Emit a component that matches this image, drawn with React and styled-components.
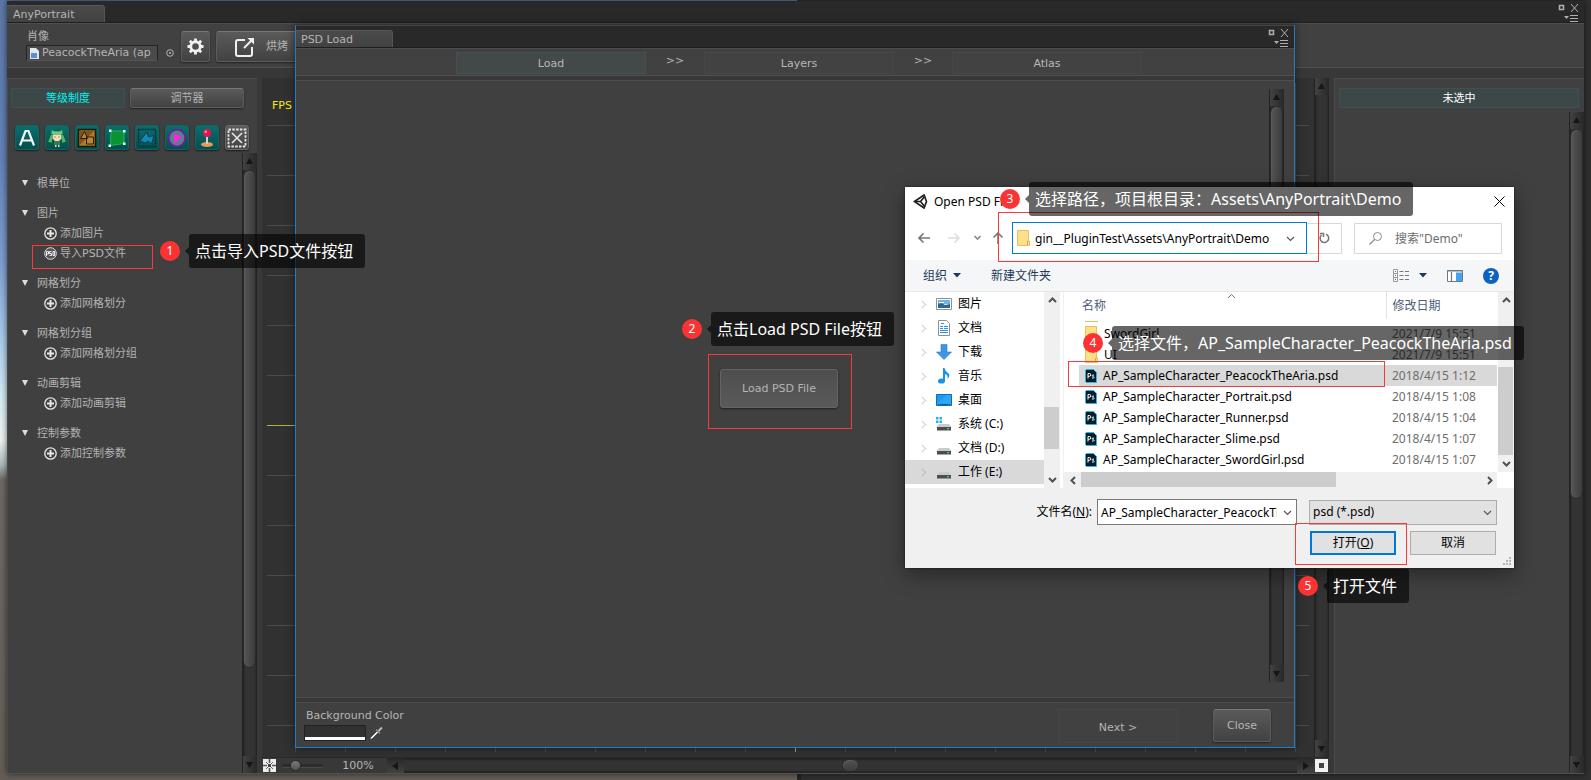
import React from "react";
import styled, { createGlobalStyle, css } from "styled-components";

const unity = '"DejaVu Sans", "Noto Sans CJK SC", sans-serif';
const win = '"Noto Sans", "Noto Sans CJK SC", sans-serif';

const GlobalStyle = createGlobalStyle`
  * { box-sizing: border-box; }
  body { margin: 0; background: #645d56; }
  button, input, select { font: inherit; color: inherit; margin: 0; padding: 0; border: 0; background: none; border-radius: 0; outline: 0; }
  button { text-align: inherit; }
  svg { display: block; flex: none; }
`;

/* ---------- desktop ---------- */

const Desktop = styled.div`
  position: relative;
  min-height: 100vh;
  padding: 1px 7px 6px;
  display: flex;
  overflow: hidden;
  background:
    linear-gradient(90deg, #242424 4px, #303030 4px) 797px 100% / 100% 6px no-repeat,
    linear-gradient(90deg, #5b74a0 797px, #303030 797px) 0 0 / 100% 1px no-repeat,
    linear-gradient(#303030, #303030) 100% 0 / 7px 100% no-repeat,
    linear-gradient(#5c76a6 0, #6382b8 160px, #7e9ccf 260px, #a9cbea 340px, #d5ecf3 400px, #eef2ec 440px, #a9b9bb 465px, #6e6763 480px, #645d56 100%);
`;

const AppWindow = styled.main`
  flex: 1;
  min-width: 0;
  display: flex;
  flex-direction: column;
  background: #383838;
  color: #b4b4b4;
  font: 11px/20px ${unity};
  box-shadow: 0 0 6px rgba(0, 0, 0, 0.6);
  border-bottom: 1px solid #505050;
`;

const TabStrip = styled.header`
  height: 22px;
  display: flex;
  align-items: flex-end;
  justify-content: space-between;
  background: #292929;
  border-bottom: 1px solid #1f1f1f;
`;

const Tab = styled.div`
  width: ${(p) => p.$width}px;
  height: 17px;
  padding-left: ${(p) => p.$pad}px;
  line-height: 18px;
  background: linear-gradient(#4a4a4a, #424242);
  border-top: 1px solid #585858;
  border-right: 1px solid #555;
  border-radius: 0 3px 0 0;
`;

const ControlsBox = styled.div`
  display: flex;
  align-self: stretch;
  padding: 2px 2px 0 0;
`;

const WindowControls = () => (
  <ControlsBox>
    <svg width="25" height="19" viewBox="0 0 25 19" fill="none" stroke="#b0b0b0">
      <path d="M2.500 2.500h4v4h-4z" strokeWidth="1.500" />
      <path d="M14 1l7 8M21 1l-7 8" />
      <path d="M7 13h5l-2.500 3z" fill="#b0b0b0" stroke="none" />
      <path d="M13 12.500h8M13 15.500h8M13 18.500h8" />
    </svg>
  </ControlsBox>
);

const raised = css`
  background: linear-gradient(#5a5a5a, #424242);
  border: 1px solid #5c5c5c;
  border-top-color: #787878;
  border-radius: 3px;
  box-shadow: 0 1px 2px rgba(0, 0, 0, 0.5);
`;

const AppHeader = styled.div`
  height: 45px;
  display: flex;
  gap: 6px;
  padding: 7px 19px 0;
  background: #414141;
  border-top: 1px solid #4e4e4e;
  border-bottom: 1px solid #505050;
`;

const ObjectField = styled.label`
  width: 149px;
  display: flex;
  flex-direction: column;
  line-height: 14px;
`;

const FieldName = styled.span`
  padding-left: 1px;
  height: 14px;
  line-height: 12px;
`;

const FieldRow = styled.span`
  display: flex;
  align-items: center;
  gap: 8px;
`;

const FieldBox = styled.span`
  width: 132px;
  height: 16px;
  display: flex;
  align-items: center;
  gap: 3px;
  padding-left: 3px;
  background: #4a4a4a;
  border: 1px solid #242424;
  border-bottom-color: #555;
`;

const FieldInput = styled.input`
  flex: 1;
  min-width: 0;
  height: 14px;
`;

const HeadButton = styled.button`
  ${raised}
  width: ${(p) => p.$width}px;
  height: 31px;
  display: flex;
  align-items: center;
  gap: 11px;
  padding-left: ${(p) => p.$pad}px;
`;

const Workspace = styled.div`
  flex: 1;
  display: flex;
  padding-top: 10px;
`;

const SidePanel = styled.aside`
  width: 250px;
  display: flex;
  flex-direction: column;
  background: #404040;
  border-top: 1px solid #4c4c4c;
  border-left: 1px solid #4a4a4a;
`;

const PanelTabs = styled.div`
  display: flex;
  gap: 5px;
  padding: 9px 13px 0 3px;
`;

const panelOn = css`
  color: #00f0f0;
  background: #3c4848;
  border: 1px solid #3b5250;
`;

const PanelTab = styled.button`
  flex: 1;
  height: 20px;
  padding-top: 1px;
  line-height: 18px;
  text-align: center;
  ${(p) => (p.$on ? panelOn : raised)}
`;

const IconRow = styled.div`
  display: flex;
  gap: 6px;
  padding: 17px 7px 3px;
`;

const IconButton = styled.button`
  width: 24px;
  height: 25px;
  display: grid;
  place-items: center;
  border-radius: 3px;
  background: ${(p) => (p.$plain ? "linear-gradient(#5c5c5c, #444)" : "linear-gradient(#0b6e6c, #054f4d)")};
  border: 1px solid ${(p) => (p.$plain ? "#6a6a6a" : "#126462")};
  box-shadow: 0 1px 2px rgba(0, 0, 0, 0.6);
`;

const ScrollArea = styled.div`
  flex: 1;
  display: flex;
  justify-content: space-between;
  padding-top: ${(p) => p.$top || 0}px;
`;

const Tree = styled.nav`
  padding: 21px 0 0 14px;
  display: flex;
  flex-direction: column;
  gap: 10px;
`;

const Group = styled.section`
  display: flex;
  flex-direction: column;
`;

const GroupHead = styled.button`
  display: flex;
  align-items: center;
  gap: 9px;
  height: 20px;
  line-height: 22px;
`;

const Leaf = styled.button`
  display: flex;
  align-items: center;
  gap: 3px;
  height: 20px;
  padding: 0 0 1px 22px;
  line-height: 22px;
`;

/* ---------- dark scrollbars ---------- */

const VBar = styled.div`
  width: 15px;
  flex: none;
  display: flex;
  flex-direction: column;
  background: #333;
  border-left: 1px solid #232323;
  box-shadow: inset 1px 0 2px rgba(0, 0, 0, 0.4), inset -1px 0 2px rgba(0, 0, 0, 0.4);
`;

const HBar = styled.div`
  height: 15px;
  flex: 1;
  display: flex;
  background: #333;
  box-shadow: inset 0 2px 2px rgba(0, 0, 0, 0.3), inset 0 -2px 2px rgba(0, 0, 0, 0.3);
`;

const BarArrow = styled.button`
  width: ${(p) => (p.$h ? 17 : 14)}px;
  height: ${(p) => (p.$h ? 15 : 17)}px;
  flex: none;
  display: grid;
  place-items: center;
  background: ${(p) => (p.$h ? "linear-gradient(#282828, #424242)" : "linear-gradient(90deg, #424242, #282828)")};
`;

const BarTrack = styled.div`
  flex: 1;
  display: flex;
  flex-direction: ${(p) => (p.$h ? "row" : "column")};
  align-items: ${(p) => (p.$h ? "center" : "flex-start")};
  justify-content: ${(p) => (p.$h ? "center" : "flex-start")};
`;

const BarThumb = styled.div`
  width: ${(p) => (p.$h ? "17px" : "13px")};
  height: ${(p) => (p.$h ? "13px" : `${p.$size}%`)};
  border-radius: 7px;
  border: 1px solid #2a2a2a;
  box-shadow: inset 1px 1px 0 #5a5a5a;
  background: ${(p) => (p.$h ? "linear-gradient(#525252, #3c3c3c)" : "linear-gradient(90deg, #555, #3c3c3c)")};
`;

const arrows = {
  up: "M3.500 0l3.500 6H0z",
  down: "M0 1h7l-3.500 6z",
  left: "M6 0v8L0 4z",
  right: "M1 0v8l6-4z",
};

const Arrow = ({ dir, h }) => (
  <BarArrow $h={h} aria-label={dir}>
    <svg width="8" height="8" viewBox="0 0 8 8">
      <path d={arrows[dir]} fill="#151515" />
    </svg>
  </BarArrow>
);

const VScroll = ({ size }) => (
  <VBar>
    <Arrow dir="up" />
    <BarTrack>{size ? <BarThumb $size={size} /> : null}</BarTrack>
    <Arrow dir="down" />
  </VBar>
);

/* ---------- canvas ---------- */

const CenterPane = styled.section`
  flex: 1;
  min-width: 0;
  display: flex;
  flex-direction: column;
  margin: 0 5px;
`;

const CanvasRow = styled.div`
  flex: 1;
  display: flex;
`;

const Canvas = styled.div`
  flex: 1;
  display: flex;
  padding: 5px;
  background: #313131;
`;

const Grid = styled.div`
  flex: 1;
  padding: 13px 5px;
  color: #f2ee1c;
  background:
    linear-gradient(#b3ad48, #b3ad48) 0 342px / 100% 1px no-repeat,
    linear-gradient(#b3ad48, #b3ad48) 528px 0 / 1px 100% no-repeat,
    linear-gradient(#4b4b4b 1px, transparent 1px) 0 42px / 100% 50px,
    linear-gradient(90deg, #4b4b4b 1px, transparent 1px) 28px 0 / 50px 100%;
`;

const InfoBody = styled.div`
  flex: 1;
`;

const ZoomBar = styled.div`
  height: 16px;
  display: flex;
  align-items: flex-end;
  border-top: 1px solid #2a2a2a;
`;

const ZoomTools = styled.div`
  width: 125px;
  height: 15px;
  display: flex;
  align-items: center;
  gap: 6px;
  padding-left: 1px;
`;

const ZoomLabel = styled.output`
  flex: 1;
  text-align: center;
`;

const Slider = styled.input`
  appearance: none;
  width: 41px;
  height: 4px;
  border-radius: 2px;
  background: #2c2c2c;
  border-bottom: 1px solid #4a4a4a;
  &::-webkit-slider-thumb {
    appearance: none;
    width: 11px;
    height: 11px;
    border-radius: 50%;
    border: 1px solid #2a2a2a;
    background: linear-gradient(#7a7a7a, #555);
  }
`;

const InfoPanel = styled.aside`
  width: 250px;
  display: flex;
  flex-direction: column;
  background: #404040;
  border-top: 1px solid #4c4c4c;
  border-left: 1px solid #4c4c4c;
`;

const InfoTitle = styled.h2`
  margin: 9px 5px 0 4px;
  height: 20px;
  padding-top: 1px;
  font: inherit;
  line-height: 18px;
  text-align: center;
  color: #fff;
  background: #3c4848;
  border: 1px solid #3b5250;
`;

/* ---------- PSD window ---------- */

const PsdWindow = styled.section`
  position: absolute;
  left: 295px;
  top: 25px;
  width: 1000px;
  height: 723px;
  display: flex;
  flex-direction: column;
  background: #383838;
  color: #b4b4b4;
  font: 11px/20px ${unity};
  border: 1px solid #1f7dca;
  border-top-color: #444;
  box-shadow: 0 0 8px rgba(0, 0, 0, 0.5);
`;

const Steps = styled.ol`
  display: flex;
  height: 28px;
  margin: 0;
  padding: 3px 0 0 160px;
  list-style: none;
  background: #414141;
  border-top: 1px solid #4c4c4c;
  border-bottom: 1px solid #505050;
`;

const Step = styled.li`
  width: 190px;
  height: 22px;
  line-height: 22px;
  text-align: center;
  color: #b8b8b8;
  background: ${(p) => (p.$on ? "#434849" : "#424242")};
  border: 1px solid ${(p) => (p.$on ? "#3f5254" : "#474747")};
`;

const StepArrow = styled.li`
  width: 58px;
  line-height: 18px;
  text-align: center;
`;

const PsdBody = styled.div`
  flex: 1;
  display: flex;
  margin: 4px 0;
  background: #404040;
  border-top: 1px solid #4e4e4e;
  border-bottom: 1px solid #4e4e4e;
  padding: 8px 10px 15px 0;
`;

const PsdContent = styled.div`
  flex: 1;
  display: flex;
  justify-content: center;
  align-items: flex-start;
  padding: 280px 7px 0 0;
`;

const LoadButton = styled.button`
  width: 118px;
  height: 39px;
  text-align: center;
  background: linear-gradient(#4e4e4e, #5a5a5a);
  border: 1px solid #646464;
  border-radius: 3px;
  box-shadow: 0 1px 2px rgba(0, 0, 0, 0.5);
`;

const PsdFooter = styled.footer`
  height: 45px;
  display: flex;
  align-items: flex-start;
  justify-content: space-between;
  padding: 6px 23px 0 8px;
  background: #404040;
  border-top: 1px solid #4e4e4e;
`;

const ColorField = styled.div`
  display: flex;
  flex-direction: column;
  line-height: 14px;
  gap: 2px;
`;

const ColorName = styled.label`
  padding-left: 2px;
`;

const ColorRow = styled.div`
  display: flex;
  gap: 3px;
`;

const Swatch = styled.button`
  width: 62px;
  height: 16px;
  background: #313131;
  border: 1px solid #222;
  box-shadow: inset 0 -3px 0 #fff;
`;

const FooterButtons = styled.div`
  display: flex;
  gap: 35px;
`;

const NextButton = styled.button`
  width: 120px;
  height: 34px;
  padding-top: 4px;
  text-align: center;
  background: #414141;
  border: 1px solid #454545;
`;

const CloseButton = styled.button`
  ${raised}
  width: 58px;
  height: 33px;
  text-align: center;
`;

/* ---------- open file dialog ---------- */

const Dialog = styled.section`
  position: absolute;
  left: 905px;
  top: 187px;
  width: 609px;
  display: flex;
  flex-direction: column;
  background: #fff;
  color: #000;
  font: 12px/16px ${win};
  box-shadow: 0 0 2px rgba(0, 0, 0, 0.6), 0 6px 20px rgba(0, 0, 0, 0.4);
`;

const DialogTitle = styled.header`
  height: 29px;
  display: flex;
  align-items: center;
  gap: 6px;
  padding: 0 9px 0 8px;
`;

const TitleText = styled.h2`
  flex: 1;
  margin: 0;
  font: inherit;
`;

const NavRow = styled.div`
  height: 44px;
  display: flex;
  align-items: center;
  padding: 0 12px 0 13px;
`;

const NavButtons = styled.div`
  width: 94px;
  display: flex;
  align-items: center;
`;

const Address = styled.div`
  width: 295px;
  height: 32px;
  display: flex;
  align-items: center;
  gap: 5px;
  padding: 0 11px 0 4px;
  border: 1px solid #0078d7;
`;

const AddressInput = styled.input`
  flex: 1;
  min-width: 0;
  height: 28px;
`;

const Refresh = styled.button`
  width: 35px;
  height: 31px;
  display: grid;
  place-items: center;
  border: 1px solid #d9d9d9;
  border-left: 0;
`;

const Search = styled.label`
  flex: 1;
  height: 31px;
  margin-left: 12px;
  display: flex;
  align-items: center;
  gap: 13px;
  padding-left: 14px;
  border: 1px solid #d9d9d9;
`;

const SearchInput = styled.input`
  width: 80px;
  height: 28px;
  &::placeholder { color: #6d6d6d; opacity: 1; }
`;

const CommandBar = styled.div`
  height: 32px;
  display: flex;
  align-items: center;
  justify-content: space-between;
  padding: 0 15px 0 18px;
  color: #1e395b;
  background: #f5f6f7;
  border-bottom: 1px solid #e6e7e8;
`;

const Commands = styled.div`
  display: flex;
  align-items: center;
  gap: ${(p) => p.$gap}px;
`;

const Command = styled.button`
  display: flex;
  align-items: center;
  gap: ${(p) => p.$gap || 6}px;
`;

const HelpButton = styled.button`
  width: 16px;
  height: 16px;
  border-radius: 50%;
  background: #0a63c2;
  color: #fff;
  font-weight: 700;
  text-align: center;
`;

const Panes = styled.div`
  height: 196px;
  display: flex;
`;

const Places = styled.ul`
  width: 139px;
  margin: 0;
  padding: 0;
  list-style: none;
`;

const Place = styled.li`
  height: 24px;
  display: flex;
  align-items: center;
  gap: 4px;
  padding-left: 14px;
  background: ${(p) => (p.$on ? "#d9d9d9" : "transparent")};
`;

const PlaceIcon = styled.span`
  width: 22px;
  display: flex;
  padding-left: 4px;
`;

const LightBar = styled.div`
  width: 16px;
  flex: none;
  display: flex;
  flex-direction: column;
  align-items: center;
  background: #f0f0f0;
`;

const LightArrow = styled.button`
  width: 16px;
  height: 17px;
  flex: none;
  display: grid;
  place-items: center;
`;

const LightTrack = styled.div`
  flex: 1;
  align-self: stretch;
  display: flex;
  padding: ${(p) => p.$before}px 1px ${(p) => p.$after}px 0;
`;

const LightThumb = styled.div`
  flex: ${(p) => p.$flex || 1};
  background: #cdcdcd;
`;

const LightGap = styled.div`
  flex: 36;
`;

const LightH = styled.div`
  height: 16px;
  margin-right: 17px;
  padding-left: 1px;
  display: flex;
  background: #f0f0f0;
`;

const FilePane = styled.div`
  flex: 1;
  min-width: 0;
  margin-left: 3px;
  display: flex;
  flex-direction: column;
  border-left: 1px solid #f0f0f0;
`;

const FileArea = styled.div`
  height: 180px;
  display: flex;
`;

const FileScroll = styled.div`
  flex: 1;
  min-width: 0;
  padding: 0 1px 0 15px;
`;

const FileTable = styled.table`
  width: 100%;
  table-layout: fixed;
  border-collapse: collapse;
`;

const Th = styled.th`
  width: ${(p) => p.$width};
  height: 27px;
  padding: 0 0 0 ${(p) => p.$pad}px;
  font-weight: 400;
  text-align: left;
  line-height: 27px;
  color: #4c607a;
  border-right: ${(p) => (p.$line ? "1px solid #e2e2e2" : "0")};
`;

const HeadCell = styled.span`
  display: flex;
  align-items: flex-start;
  gap: 121px;
`;

const FileRow = styled.tr`
  height: ${(p) => p.$height || 21}px;
  background: ${(p) => (p.$on ? "#d9d9d9" : "transparent")};
`;

const Td = styled.td`
  padding: 0 0 0 6px;
  color: ${(p) => (p.$muted ? "#6d6d6d" : "#000")};
  white-space: nowrap;
`;

const FileName = styled.span`
  display: flex;
  align-items: center;
  gap: 6px;
`;

const Sliver = styled.div`
  width: 13px;
  height: 1px;
  background: #e0bd55;
`;

const DialogFooter = styled.footer`
  height: 80px;
  display: flex;
  flex-direction: column;
  padding: 11px 17px 0;
  background: #f0f0f0;
  gap: 6px;
`;

const FormRow = styled.div`
  display: flex;
  justify-content: flex-end;
  align-items: center;
  gap: ${(p) => p.$gap}px;
  padding-right: ${(p) => p.$right || 0}px;
`;

const NameLabel = styled.label`
  margin-right: 5px;
`;

const NameBox = styled.div`
  width: 200px;
  height: 26px;
  display: flex;
  align-items: center;
  padding: 0 4px 0 3px;
  background: #fff;
  border: 1px solid #7a7a7a;
`;

const NameInput = styled.input`
  width: 177px;
  height: 24px;
  margin-right: 6px;
`;

const TypeBox = styled.div`
  width: 188px;
  height: 25px;
  margin-left: 12px;
  display: grid;
  grid-template-columns: 1fr 13px;
  align-items: center;
  background: #e1e1e1;
  border: 1px solid #adadad;
`;

const TypeSelect = styled.select`
  grid-area: 1 / 1 / 2 / 3;
  appearance: none;
  height: 23px;
  padding-left: 3px;
`;

const TypeArrow = styled.span`
  grid-area: 1 / 2;
  pointer-events: none;
`;

const DialogButton = styled.button`
  width: 86px;
  height: 24px;
  text-align: center;
  background: #e1e1e1;
  border: ${(p) => (p.$primary ? "2px solid #0078d7" : "1px solid #adadad")};
`;

const Grip = styled.div`
  position: absolute;
  right: 2px;
  bottom: 2px;
`;

/* ---------- annotations ---------- */

const Pin = styled.div`
  position: absolute;
  left: ${(p) => p.$x}px;
  top: ${(p) => p.$y}px;
  display: flex;
  align-items: center;
`;

const PinNumber = styled.span`
  width: 20px;
  height: 20px;
  border-radius: 50%;
  background: #fb3333;
  color: #fff;
  font: 12px/20px ${win};
  text-align: center;
`;

const PinArrow = styled.span`
  margin-left: 5px;
  border: 4px solid transparent;
  border-left: 0;
  border-right-color: rgba(0, 0, 0, 0.6);
`;

const PinText = styled.span`
  height: 34px;
  padding: 0 12px 0 6px;
  border-radius: 3px;
  background: rgba(0, 0, 0, 0.6);
  color: #fff;
  font: 16px/34px ${win};
  white-space: nowrap;
`;

const Highlight = styled.div`
  position: absolute;
  left: ${(p) => p.$x}px;
  top: ${(p) => p.$y}px;
  width: ${(p) => p.$w}px;
  height: ${(p) => p.$h}px;
  border: 1px solid #f83a3a;
  pointer-events: none;
`;

/* ---------- icons ---------- */

const PlusIcon = () => (
  <svg width="13" height="13" viewBox="0 0 13 13" fill="none" stroke="#e6e6e6">
    <circle cx="6.500" cy="6.500" r="5.700" strokeWidth="1.300" />
    <path d="M6.500 3v7M3 6.500h7" strokeWidth="2" />
  </svg>
);

const PsdBadgeIcon = () => (
  <svg width="13" height="13" viewBox="0 0 13 13" fill="none" stroke="#e0e0e0">
    <circle cx="6.500" cy="6.500" r="5.800" fill="#555" />
    <path d="M2.500 9V4.500h2V7h-2M7.500 4.500h-2v2h2v2h-2M9 4.500v4h1.500v-4z" stroke="#fff" strokeWidth=".9" />
  </svg>
);

const PsIcon = () => (
  <svg width="12" height="14" viewBox="0 0 12 14">
    <path d="M1.500.5h7l3 3v10h-10L.5 12.500v-11z" fill="#061e2b" stroke="#26b5ea" />
    <path d="M3 9.500V4.500h1.300q1.500 0 1.500 1.400T4.300 7.300H3M9 6.200q-1.800-.5-1.800.5c0 1 1.900.7 1.900 1.800q-.2 1-2.100.5" fill="none" stroke="#fff" />
  </svg>
);

const FolderIcon = () => (
  <svg width="13" height="16" viewBox="0 0 13 16">
    <path d="M.5.5h11v10l1 .5v4.500H.5z" fill="#ffe08a" stroke="#e6c05a" />
    <path d="M10.500 15v-4h1.500" fill="none" stroke="#d9ad3c" />
  </svg>
);

const Drive = () => (
  <g>
    <path d="M3 8h10l2 3H1z" fill="#c9cccf" />
    <path d="M1 11h14v3.500H1z" fill="#4a4e51" />
    <path d="M11 12.300h2v1h-2z" fill="#3cff4e" />
  </g>
);

const placeArt = {
  pic: (
    <g>
      <path d="M.5 2.500h15v11H.5z" fill="#fff" stroke="#8c9297" />
      <path d="M2 4h12v4H2z" fill="#6fb2e8" />
      <path d="M2 8q4-2 7 1l5-1v4H2z" fill="#2f6a8c" />
      <path d="M3 6h5v1H3z" fill="#fff" />
    </g>
  ),
  doc: (
    <g>
      <path d="M2.500.5h8l3 3v12h-11z" fill="#fff" stroke="#8c9297" />
      <path d="M5 3.500h3M4 6.500h3M4 8.500h3M8 6.500h4M8 8.500h4M4 10.500h8M4 12.500h8" stroke="#2d8fd5" />
    </g>
  ),
  down: <path d="M5 .5h6V8h4.500L8 15.500.5 8H5z" fill="#3b97e3" stroke="#2b7bc4" strokeWidth=".6" />,
  music: (
    <g>
      <ellipse cx="5.500" cy="13" rx="3.500" ry="2.600" fill="#1693e8" />
      <path d="M7 13V0h1.500q.5 3 3.500 5t-.5 6q1-4-2.500-5v7z" fill="#1693e8" />
    </g>
  ),
  desk: (
    <g>
      <path d="M.5 2.500h15v11H.5z" fill="#1a9bf0" stroke="#0d6fb8" />
      <path d="M1 11.500L11 3h4v9z" fill="#3db1fa" opacity=".5" />
      <path d="M2 12.500h1M4 12.500h8M13 12.500h1" stroke="#0d5c9c" />
    </g>
  ),
  sys: (
    <g>
      <path d="M0 1h2.500v2.500H0zM3.500 1H6v2.500H3.500zM0 4.500h2.500V7H0zM3.500 4.500H6V7H3.500z" fill="#1eb4f0" />
      <Drive />
    </g>
  ),
  drive: <Drive />,
};

const lightArrows = {
  up: "M1 6l3.500-3.500L8 6",
  down: "M1 3l3.500 3.500L8 3",
  left: "M6 1L2.500 4.500 6 8",
  right: "M3 1l3.500 3.500L3 8",
};

const Chevron = ({ dir, color = "#505050", weight = 2 }) => (
  <svg width="9" height="9" viewBox="0 0 9 9" fill="none" stroke={color} strokeWidth={weight}>
    <path d={lightArrows[dir]} />
  </svg>
);

const toolIcons = [
  ["Root", <path key="a" d="M3 17.500L8.500 3h3L17 17.500M5.500 12.500h9" fill="none" stroke="#f4f4f4" strokeWidth="2.200" />],
  [
    "Character",
    <g key="b">
      <path d="M4 5q6-5 12 0l3.500 9-4.500 1.500L14 11H6l-1 4.500L.5 14z" fill="#46b877" stroke="#14512f" />
      <path d="M4.500 1.500l2.500 1.500h6l2.500-1.500.5 5H4z" fill="#61cf8d" stroke="#1b6a3f" strokeWidth=".7" />
      <path d="M6 6.500h8V11l-2 2H8l-2-2z" fill="#ffd9b8" />
      <path d="M7.500 9h1M11.500 9h1" stroke="#a03a3a" />
      <path d="M7 13h6v4H7z" fill="#2d7f57" />
      <path d="M8 17h1.500v2H8zM11 17h1.500v2H11z" fill="#e9d0b0" />
    </g>,
  ],
  [
    "Image",
    <g key="c">
      <path d="M1.500 1.500h17v17h-17z" fill="#b07a2c" stroke="#1f1608" strokeWidth="1.600" />
      <path d="M2.500 2.500h15L2.500 17z" fill="#7a551f" />
      <path d="M3.500 10.500l4-7 3 7zM9.500 9h7v7h-7z" fill="#b98536" stroke="#2a1c08" />
    </g>,
  ],
  [
    "Mesh",
    <g key="d">
      <path d="M4 3h13v12.500L3.500 17.500z" fill="#0a9334" stroke="#1cb84c" />
      <path d="M2 1.500h2.500V4H2zM16 2h2.500v2.500H16zM16 14.500h2.500V17H16zM1.500 16.500H4V19H1.500z" fill="#f2fff4" />
    </g>,
  ],
  [
    "Mesh group",
    <g key="e">
      <path d="M1.500 1.500h17v17h-17z" fill="none" stroke="#0b2b40" strokeWidth="1.400" strokeDasharray="2 1" />
      <path d="M3 13l7-9 1.500 5L17 7.500 14.500 16 11 13l-2.500 2z" fill="#1489b3" stroke="#0a3e58" />
    </g>,
  ],
  [
    "Animation",
    <g key="f">
      <circle cx="10" cy="10" r="8.300" fill="#5b7f86" stroke="#6f1aa0" strokeWidth="1.800" />
      <path d="M7 5l8 5-8 5z" fill="#ff22e6" />
    </g>,
  ],
  [
    "Control",
    <g key="g">
      <ellipse cx="10" cy="16.500" rx="6" ry="2.500" fill="#f29455" />
      <path d="M10 7v9" stroke="#c9d4d6" strokeWidth="2" />
      <circle cx="10" cy="5" r="4" fill="#e9114f" />
      <circle cx="8.800" cy="3.800" r="1.200" fill="#ff9db8" />
    </g>,
  ],
  [
    "Deselect",
    <g key="h" fill="none" stroke="#e6e6e6">
      <path d="M1.500 1.500h17v17h-17z" strokeWidth="1.800" strokeDasharray="2.500 1.300" />
      <path d="M5 5l10 10M15 5L5 15" strokeWidth="1.600" />
    </g>,
  ],
];

/* ---------- data ---------- */

const groups = [
  ["根单位", []],
  ["图片", ["添加图片", "导入PSD文件"]],
  ["网格划分", ["添加网格划分"]],
  ["网格划分组", ["添加网格划分组"]],
  ["动画剪辑", ["添加动画剪辑"]],
  ["控制参数", ["添加控制参数"]],
];

const places = [
  ["图片", "pic"],
  ["文档", "doc"],
  ["下载", "down"],
  ["音乐", "music"],
  ["桌面", "desk"],
  ["系统 (C:)", "sys"],
  ["文档 (D:)", "drive"],
  ["工作 (E:)", "drive"],
];

const files = [
  ["SwordGirl", "2021/7/9 15:51", true],
  ["UI", "2021/7/9 15:51", true],
  ["AP_SampleCharacter_PeacockTheAria.psd", "2018/4/15 1:12"],
  ["AP_SampleCharacter_Portrait.psd", "2018/4/15 1:08"],
  ["AP_SampleCharacter_Runner.psd", "2018/4/15 1:04"],
  ["AP_SampleCharacter_Slime.psd", "2018/4/15 1:07"],
  ["AP_SampleCharacter_SwordGirl.psd", "2018/4/15 1:07"],
];

const pins = [
  [160, 234, "点击导入PSD文件按钮"],
  [682, 312, "点击Load PSD File按钮"],
  [1000, 182, "选择路径，项目根目录：Assets\\AnyPortrait\\Demo"],
  [1083, 326, "选择文件，AP_SampleCharacter_PeacockTheAria.psd"],
  [1298, 569, "打开文件"],
];

const highlights = [
  [32, 245, 121, 24],
  [708, 354, 144, 75],
  [998, 212, 321, 50],
  [1068, 361, 317, 26],
  [1295, 523, 112, 42],
];

/* ---------- sections ---------- */

const Hierarchy = () => (
  <SidePanel>
    <PanelTabs>
      <PanelTab $on>等级制度</PanelTab>
      <PanelTab>调节器</PanelTab>
    </PanelTabs>
    <IconRow>
      {toolIcons.map(([name, art], i) => (
        <IconButton key={name} aria-label={name} $plain={i === 7}>
          <svg width="20" height="20" viewBox="0 0 20 20">{art}</svg>
        </IconButton>
      ))}
    </IconRow>
    <ScrollArea>
      <Tree>
        {groups.map(([name, leaves]) => (
          <Group key={name}>
            <GroupHead>
              <svg width="6" height="8" viewBox="0 0 6 8"><path d="M0 0h6L3 6z" fill="#ddd" /></svg>
              {name}
            </GroupHead>
            {leaves.map((leaf) => (
              <Leaf key={leaf}>
                {leaf.startsWith("导入") ? <PsdBadgeIcon /> : <PlusIcon />}
                {leaf}
              </Leaf>
            ))}
          </Group>
        ))}
      </Tree>
      <VScroll size={85} />
    </ScrollArea>
  </SidePanel>
);

const Header = () => (
  <AppHeader>
    <ObjectField>
      <FieldName>肖像</FieldName>
      <FieldRow>
        <FieldBox>
          <svg width="9" height="11" viewBox="0 0 9 11">
            <path d="M0 0h6l3 3v8H0z" fill="#dfe6ee" />
            <path d="M1 5h6v5H1z" fill="#5d8fc9" />
          </svg>
          <FieldInput readOnly defaultValue="PeacockTheAria (ap" />
        </FieldBox>
        <svg width="8" height="8" viewBox="0 0 8 8" fill="none" stroke="#b4b4b4">
          <circle cx="4" cy="4" r="3.300" />
          <circle cx="4" cy="4" r="1" fill="#b4b4b4" stroke="none" />
        </svg>
      </FieldRow>
    </ObjectField>
    <HeadButton $width={29} $pad={5} aria-label="Settings">
      <svg width="17" height="17" viewBox="0 0 18 18" fill="none" stroke="#f0f0f0">
        <circle cx="9" cy="9" r="5" strokeWidth="3" />
        <path d="M9 .5v3M9 14.500v3M.5 9h3M14.500 9h3M3 3l2 2M13 13l2 2M15 3l-2 2M5 13l-2 2" strokeWidth="3" />
      </svg>
    </HeadButton>
    <HeadButton $width={130} $pad={18}>
      <svg width="20" height="20" viewBox="0 0 20 20" fill="none" stroke="#f0f0f0" strokeWidth="2">
        <path d="M10 3H3q-2 0-2 2v12q0 2 2 2h12q2 0 2-2v-7" />
        <path d="M9 11l8-8" />
        <path d="M12.500 1H19v6.500z" fill="#f0f0f0" stroke="none" />
      </svg>
      烘烤
    </HeadButton>
  </AppHeader>
);

const Center = () => (
  <CenterPane>
    <CanvasRow>
      <Canvas><Grid>FPS</Grid></Canvas>
      <VScroll />
    </CanvasRow>
    <ZoomBar>
      <ZoomTools>
        <svg width="13" height="13" viewBox="0 0 13 13">
          <path d="M0 0h13v13H0z" fill="#ececec" />
          <path d="M6.500 0v4M6.500 9v4M0 6.500h4M9 6.500h4" stroke="#555" strokeWidth="1.600" />
          <path d="M5 5h3v3H5z" fill="#444" />
          <path d="M3 3l2 2M10 3L8 5M3 10l2-2M10 10L8 8" stroke="#666" />
        </svg>
        <Slider type="range" aria-label="Zoom" min="0" max="100" defaultValue="28" />
        <ZoomLabel>100%</ZoomLabel>
      </ZoomTools>
      <HBar>
        <Arrow dir="left" h />
        <BarTrack $h><BarThumb $h /></BarTrack>
        <Arrow dir="right" h />
      </HBar>
      <svg width="15" height="15" viewBox="0 0 15 15">
        <path d="M1 1h13v13H1z" fill="#f2f2f2" />
        <path d="M5 5h5v5H5z" fill="#444" />
      </svg>
    </ZoomBar>
  </CenterPane>
);

const Psd = () => (
  <PsdWindow>
    <TabStrip>
      <Tab $width={97} $pad={5}>PSD Load</Tab>
      <WindowControls />
    </TabStrip>
    <Steps>
      <Step $on>Load</Step>
      <StepArrow>&gt;&gt;</StepArrow>
      <Step>Layers</Step>
      <StepArrow>&gt;&gt;</StepArrow>
      <Step>Atlas</Step>
    </Steps>
    <PsdBody>
      <PsdContent>
        <LoadButton>Load PSD File</LoadButton>
      </PsdContent>
      <VScroll size={70} />
    </PsdBody>
    <PsdFooter>
      <ColorField>
        <ColorName htmlFor="bg-color">Background Color</ColorName>
        <ColorRow>
          <Swatch id="bg-color" />
          <svg width="14" height="15" viewBox="0 0 14 15">
            <path d="M1 14.500l.5-2L8 6l1.500 1.500L3 14z" fill="#f2f2f2" stroke="#1c1c1c" strokeWidth=".6" />
            <path d="M7 4.500l4 4" stroke="#8a8a8a" strokeWidth="1.500" />
            <path d="M9.500 6L13 2.500" stroke="#b8b8b8" strokeWidth="2" />
          </svg>
        </ColorRow>
      </ColorField>
      <FooterButtons>
        <NextButton>Next &gt;</NextButton>
        <CloseButton>Close</CloseButton>
      </FooterButtons>
    </PsdFooter>
  </PsdWindow>
);

const OpenDialog = () => (
  <Dialog role="dialog" aria-labelledby="open-title">
    <DialogTitle>
      <svg width="15" height="15" viewBox="0 0 15 15" fill="none" stroke="#222" strokeWidth="1.700">
        <path d="M1.500 7.500L11 1l2.500 6.500L11 14z" />
        <path d="M1.500 7.500h6M7.500 7.500L12 2M7.500 7.500L12 13" />
      </svg>
      <TitleText id="open-title">Open PSD File</TitleText>
      <button aria-label="Close dialog">
        <svg width="11" height="11" viewBox="0 0 11 11" stroke="#000"><path d="M.5.500l10 10M10.500.500l-10 10" /></svg>
      </button>
    </DialogTitle>
    <NavRow>
      <NavButtons>
        <svg width="86" height="12" viewBox="0 0 86 12" fill="none" strokeWidth="1.600">
          <path d="M12 6H1M5.500 1.500L1 6l4.500 4.500" stroke="#777" />
          <path d="M30 6h11M36.500 1.500L41 6l-4.500 4.500" stroke="#ddd" />
          <path d="M56.500 4l3 3 3-3" stroke="#888" />
          <path d="M80 12V1M75.500 5.500L80 1l4.500 4.500" stroke="#777" />
        </svg>
      </NavButtons>
      <Address>
        <FolderIcon />
        <AddressInput aria-label="Address" defaultValue="gin__PluginTest\Assets\AnyPortrait\Demo" />
        <Chevron dir="down" color="#555" weight={1.2} />
      </Address>
      <Refresh aria-label="Refresh">
        <svg width="11" height="12" viewBox="0 0 11 12" fill="none" stroke="#777" strokeWidth="1.600">
          <path d="M7 2.200A4.300 4.300 0 1 1 2.500 3M1 1.500h3.500V5" />
        </svg>
      </Refresh>
      <Search>
        <svg width="13" height="13" viewBox="0 0 13 13" fill="none" stroke="#8a8a8a">
          <circle cx="8.500" cy="4.500" r="4" />
          <path d="M5.500 7.500L.5 12.500" strokeWidth="1.300" />
        </svg>
        <SearchInput aria-label="Search" placeholder={'搜索"Demo"'} />
      </Search>
    </NavRow>
    <CommandBar>
      <Commands $gap={30}>
        <Command>
          组织
          <svg width="8" height="5" viewBox="0 0 8 5"><path d="M0 0h8L4 4.500z" fill="#1e395b" /></svg>
        </Command>
        <Command>新建文件夹</Command>
      </Commands>
      <Commands $gap={20}>
        <Command $gap={10} aria-label="View">
          <svg width="16" height="13" viewBox="0 0 16 13" fill="none">
            <path d="M.5.500h4v12h-4zM.5 4.500h4M.5 8.500h4" stroke="#999" />
            <path d="M6.500 2.500h4M12 2.500h4M6.500 6.500h4M12 6.500h4M6.500 10.500h4M12 10.500h4" stroke="#777" />
            <path d="M2 2.500h1M2 6.500h1" stroke="#2d8fd5" />
            <path d="M2 10.500h1" stroke="#e03030" />
          </svg>
          <svg width="8" height="5" viewBox="0 0 8 5"><path d="M0 0h8L4 4.500z" fill="#1e395b" /></svg>
        </Command>
        <Command aria-label="Preview pane">
          <svg width="16" height="12" viewBox="0 0 16 12" fill="none">
            <path d="M.5.500h15v11H.5z" fill="#fff" stroke="#6b7985" />
            <path d="M0 1h16M4.500 2v10" stroke="#6b7985" strokeWidth="1.200" />
            <path d="M9 2.500h6V11H9z" fill="#45a3ee" />
          </svg>
        </Command>
        <HelpButton>?</HelpButton>
      </Commands>
    </CommandBar>
    <Panes>
      <Places>
        {places.map(([name, art], i) => (
          <Place key={name} $on={i === 7}>
            <Chevron dir="right" color={i === 7 ? "#c2c2c2" : "#d8d8d8"} weight={1.4} />
            <PlaceIcon><svg width="16" height="16" viewBox="0 0 16 16">{placeArt[art]}</svg></PlaceIcon>
            {name}
          </Place>
        ))}
      </Places>
      <LightBar>
        <LightArrow aria-label="Scroll up"><Chevron dir="up" /></LightArrow>
        <LightTrack $before={98} $after={22}><LightThumb /></LightTrack>
        <LightArrow aria-label="Scroll down"><Chevron dir="down" /></LightArrow>
      </LightBar>
      <FilePane>
        <FileArea>
          <FileScroll>
            <FileTable>
              <thead>
                <tr>
                  <Th $width="307px" $pad={3} $line>
                    <HeadCell>
                      名称
                      <Chevron dir="up" color="#777" weight={1} />
                    </HeadCell>
                  </Th>
                  <Th $width="auto" $pad={6}>修改日期</Th>
                </tr>
              </thead>
              <tbody>
                <FileRow $height={4}><Td colSpan={2}><Sliver /></Td></FileRow>
                {files.map(([name, date, folder], i) => (
                  <FileRow key={name} $on={i === 2}>
                    <Td>
                      <FileName>{folder ? <FolderIcon /> : <PsIcon />}{name}</FileName>
                    </Td>
                    <Td $muted>{date}</Td>
                  </FileRow>
                ))}
              </tbody>
            </FileTable>
          </FileScroll>
          <LightBar>
            <LightArrow aria-label="Scroll up"><Chevron dir="up" /></LightArrow>
            <LightTrack $before={58} $after={0}><LightThumb /></LightTrack>
            <LightArrow aria-label="Scroll down"><Chevron dir="down" /></LightArrow>
          </LightBar>
        </FileArea>
        <LightH>
          <LightArrow aria-label="Scroll left"><Chevron dir="left" /></LightArrow>
          <LightTrack $before={0} $after={1}>
            <LightThumb $flex={64} />
            <LightGap />
          </LightTrack>
          <LightArrow aria-label="Scroll right"><Chevron dir="right" /></LightArrow>
        </LightH>
      </FilePane>
    </Panes>
    <DialogFooter>
      <FormRow $gap={0}>
        <NameLabel htmlFor="file-name">文件名(<u>N</u>):</NameLabel>
        <NameBox>
          <NameInput id="file-name" defaultValue="AP_SampleCharacter_PeacockTheAria.psd" />
          <Chevron dir="down" color="#555" weight={1.2} />
        </NameBox>
        <TypeBox>
          <TypeSelect aria-label="File type"><option>psd (*.psd)</option></TypeSelect>
          <TypeArrow><Chevron dir="down" color="#555" weight={1.2} /></TypeArrow>
        </TypeBox>
      </FormRow>
      <FormRow $gap={14} $right={1}>
        <DialogButton $primary>打开(<u>O</u>)</DialogButton>
        <DialogButton>取消</DialogButton>
      </FormRow>
    </DialogFooter>
    <Grip>
      <svg width="9" height="9" viewBox="0 0 9 9" fill="#b8b8b8">
        <path d="M6 0h2v2H6zM3 3h2v2H3zM6 3h2v2H6zM0 6h2v2H0zM3 6h2v2H3zM6 6h2v2H6z" />
      </svg>
    </Grip>
  </Dialog>
);

export default function App() {
  return (
    <Desktop>
      <GlobalStyle />
      <AppWindow>
        <TabStrip>
          <Tab $width={98} $pad={6}>AnyPortrait</Tab>
          <WindowControls />
        </TabStrip>
        <Header />
        <Workspace>
          <Hierarchy />
          <Center />
          <InfoPanel>
            <InfoTitle>未选中</InfoTitle>
            <ScrollArea $top={4}>
              <InfoBody />
              <VScroll size={59} />
            </ScrollArea>
          </InfoPanel>
        </Workspace>
      </AppWindow>
      <Psd />
      <OpenDialog />
      {highlights.map(([x, y, w, h]) => (
        <Highlight key={y} $x={x} $y={y} $w={w} $h={h} />
      ))}
      {pins.map(([x, y, text], i) => (
        <Pin key={text} $x={x} $y={y}>
          <PinNumber>{i + 1}</PinNumber>
          <PinArrow />
          <PinText>{text}</PinText>
        </Pin>
      ))}
    </Desktop>
  );
}
